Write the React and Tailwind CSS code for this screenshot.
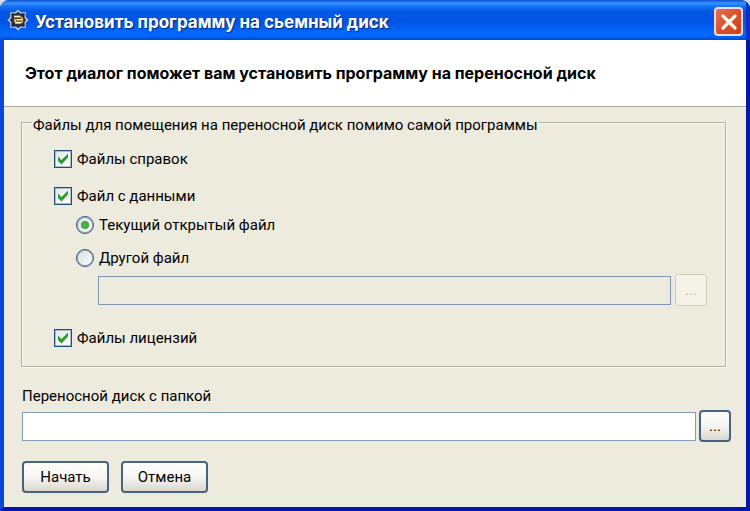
import { useState } from "react";

function AppIcon() {
  return (
    <svg viewBox="0 0 22 22" className="h-[22px] w-[22px] shrink-0" aria-hidden="true">
      <rect x="3" y="3" width="16" height="16" fill="#8fa6c8" />
      <rect x="3.500" y="3.500" width="15" height="15" fill="#c9d0d8" transform="rotate(45 11 11)" />
      <rect x="4.500" y="4.500" width="13" height="13" fill="#1d2742" />
      <rect x="5" y="5" width="12" height="12" fill="#2a3350" transform="rotate(45 11 11)" />
      <path d="M7 6.500h6l2 2h1v5l-2 1H9l-2-2z" fill="#d9b545" />
      <path d="M7 7h6v1.500H7zM10 10h5v1.500h-5zM8 13h6v1.500H8z" fill="#fdf3c0" />
      <path d="M7 8.500h7v1.500H7zM9 11.500h6v1H9z" fill="#4a3a1c" />
    </svg>
  );
}

function CheckOption({ label, checked, onChange }) {
  return (
    <label className="flex items-center gap-[5px]">
      <span className="grid h-[18px] w-[18px] shrink-0">
        <input
          type="checkbox"
          checked={checked}
          onChange={onChange}
          className="peer col-start-1 row-start-1 h-[18px] w-[18px] appearance-none border border-[#1f4f7a] bg-linear-to-br from-[#e4e8e4] to-white shadow-[inset_0_0_0_1px_#a9bccb]"
        />
        <svg
          viewBox="0 0 18 18"
          className="pointer-events-none invisible col-start-1 row-start-1 h-[18px] w-[18px] peer-checked:visible"
        >
          <path d="M4 6.500 7.500 10 14 3.500V7.500L7.500 14.500 4 11z" fill="#2f9a36" />
        </svg>
      </span>
      {label}
    </label>
  );
}

function RadioOption({ label, value, selected, onSelect }) {
  return (
    <label className="flex items-center gap-[5px]">
      <span className="grid h-[18px] w-[18px] shrink-0 place-items-center">
        <input
          type="radio"
          name="dataFile"
          value={value}
          checked={selected === value}
          onChange={() => onSelect(value)}
          className="peer col-start-1 row-start-1 h-[18px] w-[18px] appearance-none rounded-full border border-[#2f587e] bg-linear-to-br from-[#d9dddc] to-white shadow-[inset_0_0_0_1px_#9db0c0]"
        />
        <span className="pointer-events-none invisible col-start-1 row-start-1 h-[8px] w-[8px] rounded-full bg-radial from-[#55c04f] to-[#2b9a34] peer-checked:visible" />
      </span>
      {label}
    </label>
  );
}

const buttonClass =
  "h-8 rounded-[4px] border-2 border-[#46637f] bg-linear-to-b from-white via-[#f6f5f1] to-[#dcd8cf] text-black";

export default function App() {
  const [help, setHelp] = useState(true);
  const [data, setData] = useState(true);
  const [license, setLicense] = useState(true);
  const [source, setSource] = useState("current");
  const [otherFile, setOtherFile] = useState("");
  const [folder, setFolder] = useState("");

  const otherDisabled = source !== "other";

  return (
    <div className="min-h-screen bg-[#d8dce6] font-['Roboto',Arial,sans-serif] text-[15px] leading-5 text-black">
      <div className="flex min-h-screen flex-col overflow-hidden rounded-t-[9px] bg-[#0831d9]">
        {/* Title bar */}
        <header className="flex h-10 items-center gap-[6px] border-r-4 border-[#0a2fc4] bg-[linear-gradient(to_bottom,#0a4fd0_0%,#3a92ff_8%,#1272f4_16%,#0456e4_30%,#0055e5_55%,#0365fb_78%,#0267ff_90%,#0048c8_100%)] pr-[3px] pl-[7px]">
          <AppIcon />
          <h1 className="grow pt-1 font-['Inter',Arial,sans-serif] text-[17px] leading-6 font-bold whitespace-nowrap text-white [text-shadow:1px_1px_1px_#0a2a80]">
            Установить программу на сьемный диск
          </h1>
          <button
            type="button"
            aria-label="Закрыть"
            className="mt-[3px] flex h-[29px] w-[29px] items-center justify-center rounded-[4px] border-2 border-[#f0dbe4] bg-linear-to-br from-[#e2735a] via-[#dc4f2c] to-[#c8401c]"
          >
            <svg viewBox="0 0 16 16" className="h-4 w-4">
              <path d="M2 2 14 14M14 2 2 14" stroke="#fff6e6" strokeWidth="3.200" strokeLinecap="round" />
            </svg>
          </button>
        </header>

        <div className="flex grow flex-col border-r-4 border-b-4 border-l-4 border-r-[#0019ab] border-b-[#0019ab] border-l-[#0a48d8] bg-[#edeade]">
          {/* Intro banner */}
          <div className="border-b border-[#aaa99d] bg-white px-[21px] py-[23px]">
            <p className="font-['Inter',Arial,sans-serif] text-[16px] leading-5 font-bold whitespace-nowrap">
              Этот диалог поможет вам установить программу на переносной диск
            </p>
          </div>

          <form className="flex flex-col pt-1 pr-[15px] pl-[17px]" onSubmit={(e) => e.preventDefault()}>
            {/* Files to copy */}
            <fieldset className="mr-[5px] border border-[#b3b1a4] pr-[18px] pb-[18px] pl-8 shadow-[inset_1px_1px_0_#fbfaf4,1px_1px_0_#fbfaf4]">
              <legend className="-ml-[22px] bg-[#edeade] px-px pt-[6px] leading-4 whitespace-nowrap">
                Файлы для помещения на переносной диск помимо самой программы
              </legend>

              <div className="flex flex-col gap-[17px] pt-4">
                <CheckOption label="Файлы справок" checked={help} onChange={() => setHelp(!help)} />
                <CheckOption label="Файл с данными" checked={data} onChange={() => setData(!data)} />
              </div>

              <div className="flex flex-col gap-[13px] pt-[9px] pl-[22px]">
                <RadioOption label="Текущий открытый файл" value="current" selected={source} onSelect={setSource} />
                <RadioOption label="Другой файл" value="other" selected={source} onSelect={setSource} />
              </div>

              <div className="flex items-center gap-1 pt-[6px] pl-11">
                <input
                  type="text"
                  aria-label="Другой файл"
                  disabled={otherDisabled}
                  value={otherFile}
                  onChange={(e) => setOtherFile(e.target.value)}
                  className="h-[29px] min-w-0 grow border border-[#8095b0] bg-white px-1 disabled:bg-[#edeade]"
                />
                <button
                  type="button"
                  disabled={otherDisabled}
                  className="h-8 w-8 rounded-[3px] border border-[#cfccbe] bg-[#f4f2e9] text-[#b5b2a4]"
                >
                  ...
                </button>
              </div>

              <div className="pt-[22px]">
                <CheckOption label="Файлы лицензий" checked={license} onChange={() => setLicense(!license)} />
              </div>
            </fieldset>

            {/* Target folder */}
            <label htmlFor="folder" className="pt-[19px] pl-px">
              Переносной диск с папкой
            </label>
            <div className="flex items-center gap-[3px] pt-1 pl-px">
              <input
                id="folder"
                type="text"
                value={folder}
                onChange={(e) => setFolder(e.target.value)}
                className="h-[29px] min-w-0 grow border border-[#7f9db9] bg-white px-1"
              />
              <button type="button" className={`${buttonClass} w-8`}>
                ...
              </button>
            </div>

            {/* Actions */}
            <div className="flex gap-3 pt-[19px] pb-3 pl-px">
              <button type="submit" className={`${buttonClass} w-[87px]`}>
                Начать
              </button>
              <button type="button" className={`${buttonClass} w-[87px]`}>
                Отмена
              </button>
            </div>
          </form>
        </div>
      </div>
    </div>
  );
}
